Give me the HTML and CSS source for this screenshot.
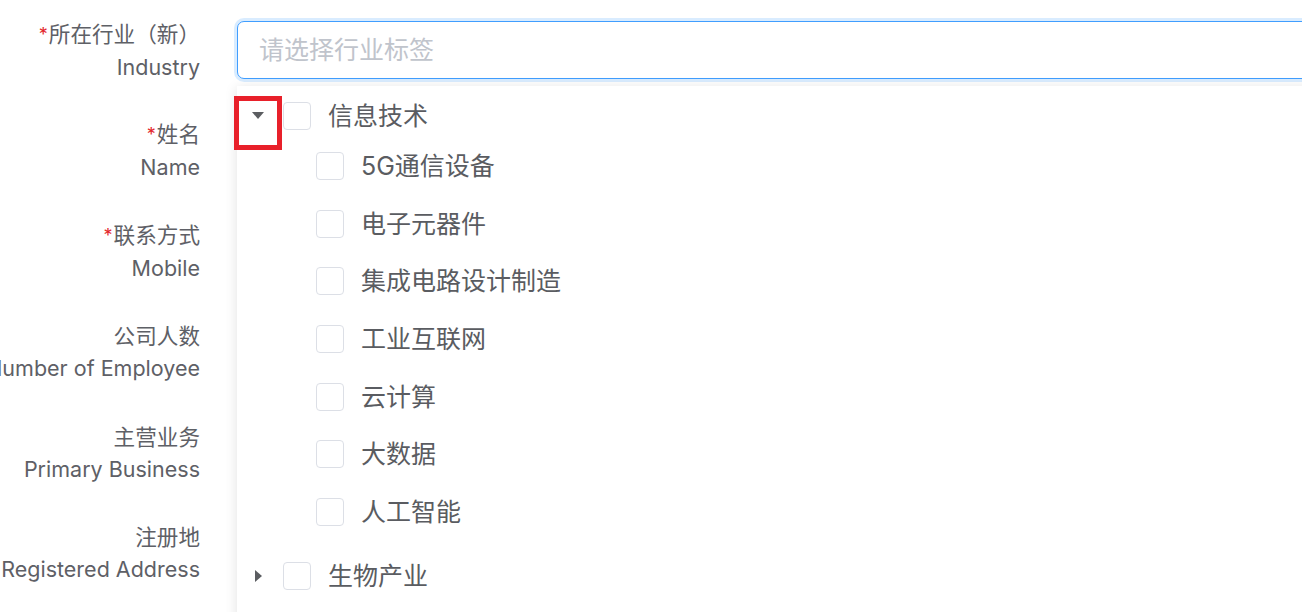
FILE: index.html
```html
<!DOCTYPE html>
<html lang="zh-CN">
<head>
<meta charset="utf-8">
<title>行业选择</title>
<link rel="stylesheet" href="styles.css">
</head>
<body>
<div class="page">
  <div class="form">
    <div class="row">
      <div class="label"><span class="zh"><span class="req">*</span>所在行业（新）</span><span class="en">Industry</span></div>
      <div class="control">
        <div class="input">请选择行业标签</div>
        <div class="dropdown">
          <div class="tree">
            <div class="node">
              <div class="node-row parent">
                <span class="caret down"></span>
                <span class="checkbox"></span>
                <span class="node-label">信息技术</span>
              </div>
              <div class="children">
                <div class="node-row child"><span class="checkbox"></span><span class="node-label">5G通信设备</span></div>
                <div class="node-row child"><span class="checkbox"></span><span class="node-label">电子元器件</span></div>
                <div class="node-row child"><span class="checkbox"></span><span class="node-label">集成电路设计制造</span></div>
                <div class="node-row child"><span class="checkbox"></span><span class="node-label">工业互联网</span></div>
                <div class="node-row child"><span class="checkbox"></span><span class="node-label">云计算</span></div>
                <div class="node-row child"><span class="checkbox"></span><span class="node-label">大数据</span></div>
                <div class="node-row child"><span class="checkbox"></span><span class="node-label">人工智能</span></div>
              </div>
            </div>
            <div class="node next">
              <div class="node-row parent">
                <span class="caret right"></span>
                <span class="checkbox"></span>
                <span class="node-label">生物产业</span>
              </div>
            </div>
          </div>
        </div>
      </div>
    </div>
    <div class="row">
      <div class="label"><span class="zh"><span class="req">*</span>姓名</span><span class="en">Name</span></div>
      <div class="control"></div>
    </div>
    <div class="row">
      <div class="label"><span class="zh"><span class="req">*</span>联系方式</span><span class="en">Mobile</span></div>
      <div class="control"></div>
    </div>
    <div class="row">
      <div class="label"><span class="zh">公司人数</span><span class="en">Number of Employee</span></div>
      <div class="control"></div>
    </div>
    <div class="row">
      <div class="label"><span class="zh">主营业务</span><span class="en">Primary Business</span></div>
      <div class="control"></div>
    </div>
    <div class="row">
      <div class="label"><span class="zh">注册地</span><span class="en">Registered Address</span></div>
      <div class="control"></div>
    </div>
  </div>
  <div class="annot"></div>
</div>
</body>
</html>
```

FILE: styles.css
```css
html, body {
  margin: 0;
  padding: 0;
  background: #ffffff;
  overflow: hidden;
}

body {
  font-family: "Inter", "Noto Sans CJK SC", sans-serif;
  color: #606266;
}

.page {
  position: relative;
  width: 1302px;
  height: 612px;
  overflow: hidden;
}

.form {
  width: 1340px;
}

.row {
  display: grid;
  grid-template-columns: 200px 1fr;
  column-gap: 37px;
  align-items: center;
  height: 100.6px;
}

.label {
  display: flex;
  flex-direction: column;
  align-items: flex-end;
  text-align: right;
  white-space: nowrap;
  font-size: 21.6px;
  line-height: 32px;
  color: #5e6066;
}

.label .en {
  font-size: 21.5px;
}

.req {
  color: #e3262c;
  font-size: 18px;
  margin-right: 1px;
  vertical-align: 1px;
}

.control {
  position: relative;
  height: 58px;
}

.input {
  box-sizing: border-box;
  height: 58px;
  border: 1.5px solid #409eff;
  border-radius: 7px;
  box-shadow: 0 0 0 3px rgba(64, 158, 255, 0.2);
  padding-left: 21px;
  padding-bottom: 5px;
  display: flex;
  align-items: center;
  font-size: 25px;
  color: #c0c4cc;
  background: #fff;
}

.dropdown {
  position: absolute;
  left: 0;
  right: 0;
  top: 64.7px;
  height: 620px;
  background: #fff;
  box-shadow: 0 2px 12px 0 rgba(0, 0, 0, 0.12);
  z-index: 5;
  box-sizing: border-box;
  padding-top: 8.5px;
}

.node-row {
  display: flex;
  align-items: center;
  font-size: 25px;
  color: #5a5c61;
}

.node-row.parent {
  height: 43px;
}

.node-row.child {
  height: 57.6px;
  padding-left: 79px;
}

.node.next {
  margin-top: 13.8px;
}

.caret {
  width: 24px;
  height: 24px;
  margin-left: 9px;
  margin-right: 13px;
  display: flex;
  align-items: center;
  justify-content: center;
  flex: none;
}

.caret::before {
  content: "";
  display: block;
  width: 0;
  height: 0;
}

.caret.down::before {
  border-left: 6px solid transparent;
  border-right: 6px solid transparent;
  border-top: 7px solid #5b5d61;
}

.caret.right::before {
  border-top: 6px solid transparent;
  border-bottom: 6px solid transparent;
  border-left: 7.5px solid #5b5d61;
  margin-left: 1px;
}

.checkbox {
  box-sizing: border-box;
  width: 28px;
  height: 28px;
  border: 1px solid #dcdfe6;
  border-radius: 4px;
  background: #fff;
  flex: none;
}

.node-label {
  margin-left: 17px;
  padding-bottom: 4px;
  white-space: nowrap;
}

.annot {
  position: absolute;
  left: 234px;
  top: 96px;
  width: 48px;
  height: 54px;
  box-sizing: border-box;
  border: 5px solid #e8202a;
  z-index: 10;
}
```
